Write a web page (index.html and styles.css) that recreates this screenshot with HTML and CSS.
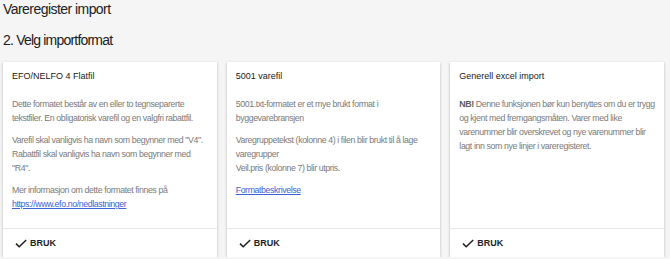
FILE: index.html
```html
<!DOCTYPE html>
<html lang="no">
<head>
    <meta charset="UTF-8">
    <title>Vareregister import</title>
    <link rel="stylesheet" href="styles.css">
</head>
<body>
    <h1 class="page-title">Vareregister import</h1>
    <h2 class="step-title">2. Velg importformat</h2>

    <div class="format-grid">
        <!-- EFO/NELFO -->
        <div class="format-card">
            <div class="card-head">EFO/NELFO 4 Flatfil</div>
            <div class="card-body">
                <p>Dette formatet består av en eller to tegnseparerte tekstfiler. En obligatorisk varefil og en valgfri rabattfil.</p>
                <p>Varefil skal vanligvis ha navn som begynner med "V4".<br>Rabattfil skal vanligvis ha navn som begynner med<br>"R4".</p>
                <p>Mer informasjon om dette formatet finnes på<br><a href="#">https://www.efo.no/nedlastninger</a></p>
            </div>
            <div class="card-actions">
                <button class="use-btn"><svg width="12" height="9" viewBox="0 0 12 9"><path d="M1 4.6 L4.2 7.8 L11.2 1" fill="none" stroke="#1f1f1f" stroke-width="1.5"/></svg>BRUK</button>
            </div>
        </div>
        <!-- 5001 -->
        <div class="format-card">
            <div class="card-head">5001 varefil</div>
            <div class="card-body">
                <p>5001.txt-formatet er et mye brukt format i byggevarebransjen</p>
                <p>Varegruppetekst (kolonne 4) i filen blir brukt til å lage varegrupper<br>Veil.pris (kolonne 7) blir utpris.</p>
                <p><a href="#">Formatbeskrivelse</a></p>
            </div>
            <div class="card-actions">
                <button class="use-btn"><svg width="12" height="9" viewBox="0 0 12 9"><path d="M1 4.6 L4.2 7.8 L11.2 1" fill="none" stroke="#1f1f1f" stroke-width="1.5"/></svg>BRUK</button>
            </div>
        </div>
        <!-- Excel -->
        <div class="format-card">
            <div class="card-head">Generell excel import</div>
            <div class="card-body">
                <p><b>NB!</b> Denne funksjonen bør kun benyttes om du er trygg og kjent med fremgangsmåten. Varer med like varenummer blir overskrevet og nye varenummer blir lagt inn som nye linjer i vareregisteret.</p>
            </div>
            <div class="card-actions">
                <button class="use-btn"><svg width="12" height="9" viewBox="0 0 12 9"><path d="M1 4.6 L4.2 7.8 L11.2 1" fill="none" stroke="#1f1f1f" stroke-width="1.5"/></svg>BRUK</button>
            </div>
        </div>
    </div>
</body>
</html>
```

FILE: styles.css
```css
body {
    font-family: "Liberation Sans", Arial, sans-serif;
    background-color: #f5f5f5;
    color: #212121;
    margin: 0;
    padding: 0 6px 0 3px;
    overflow: hidden;
}
.page-title {
    font-size: 14px;
    font-weight: normal;
    letter-spacing: -0.55px;
    margin: 0;
    line-height: 18px;
}
.step-title {
    font-size: 14px;
    font-weight: normal;
    letter-spacing: -0.8px;
    margin: 13px 0 0 0;
    line-height: 18px;
}
/* Cards */
.format-grid {
    display: grid;
    grid-template-columns: repeat(3, 1fr);
    gap: 10px;
    margin-top: 13px;
}
.format-card {
    background-color: #ffffff;
    box-shadow: 0 1px 3px rgba(0, 0, 0, 0.2), 0 1px 1px rgba(0, 0, 0, 0.12);
    display: flex;
    flex-direction: column;
    height: 195px;
}
.card-head {
    font-size: 9px;
    padding: 7px 6px 0 9px;
    line-height: 14px;
}
.card-body {
    flex: 1;
    padding: 14px 6px 0 9px;
    font-size: 8.8px;
    letter-spacing: -0.4px;
    line-height: 14px;
    color: #7a7a7a;
}
.card-body p {
    margin: 0 0 8px 0;
}
.card-body b {
    color: #5a5a5a;
}
.card-body a {
    color: #3b63d6;
}
.card-actions {
    border-top: 1px solid #e6e6e6;
    height: 28px;
    display: flex;
    align-items: center;
    padding-left: 12px;
}
.use-btn {
    background: none;
    border: none;
    font-family: inherit;
    font-size: 9px;
    font-weight: bold;
    color: #1f1f1f;
    display: flex;
    align-items: center;
    gap: 3px;
    padding: 0;
    cursor: pointer;
}
```
